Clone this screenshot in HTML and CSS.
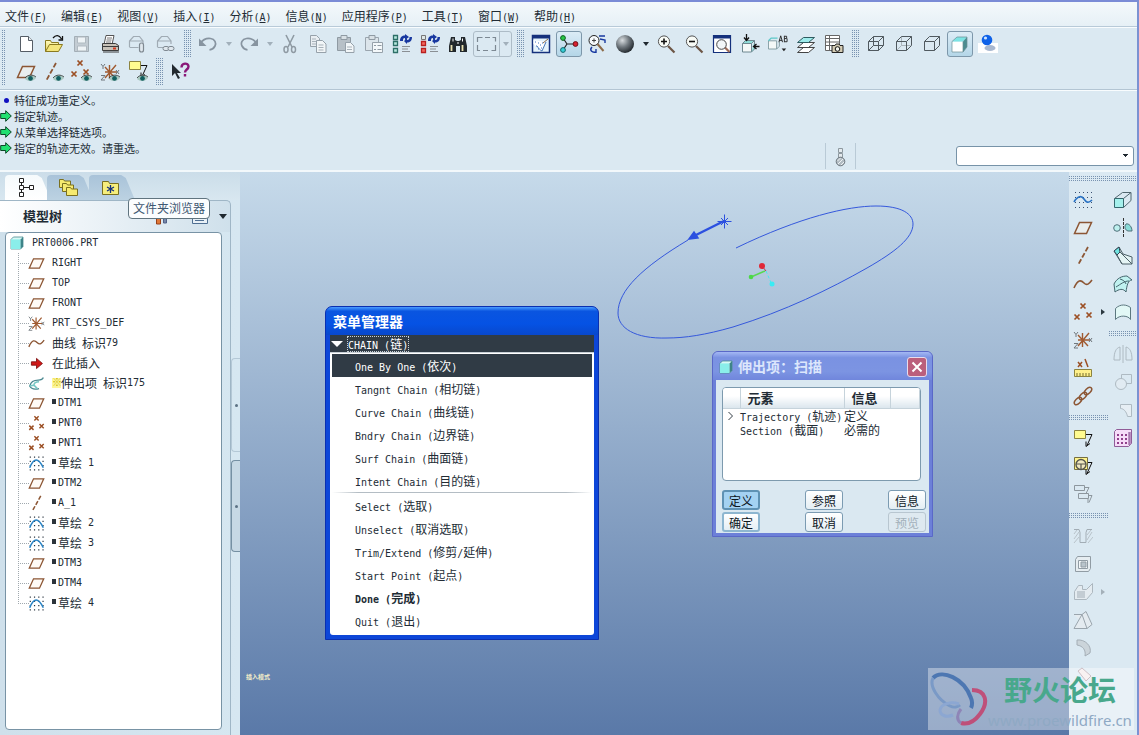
FILE: index.html
```
<!DOCTYPE html>
<html lang="zh-CN">
<head>
<meta charset="utf-8">
<title>PRT0006</title>
<link rel="stylesheet" href="styles.css">
</head>
<body>
<svg class="defs" width="0" height="0" aria-hidden="true">
  <defs>
    <linearGradient id="gfold" x2="0" y2="1"><stop offset="0" stop-color="#fffbc0"/><stop offset="1" stop-color="#e8d860"/></linearGradient>
    <radialGradient id="gball" cx=".35" cy=".3" r=".75"><stop offset="0" stop-color="#d8dde0"/><stop offset=".5" stop-color="#6f777d"/><stop offset="1" stop-color="#1d2328"/></radialGradient>
    <symbol id="new" viewBox="0 0 20 20"><path d="M4.500 2.500h8l4 4v11h-12z" fill="#fff" stroke="#555d66"/><path d="M12.500 2.500v4h4" fill="#e8eef2" stroke="#555d66"/></symbol>
    <symbol id="open" viewBox="0 0 20 20"><path d="M1.500 17.500v-11h5l1 2h7v3" fill="url(#gfold)" stroke="#8a7a20"/><path d="M1.500 17.500l4-7h13l-4 7z" fill="#f4e67c" stroke="#8a7a20"/><path d="M9 4c3-3.500 6-3 8.500 1M18.500 2v4h-4" fill="none" stroke="#111" stroke-width="1.300"/></symbol>
    <symbol id="save" viewBox="0 0 20 20"><path d="M2.500 2.500h14v15h-14z" fill="#c3ccd3" stroke="#a3aeb6"/><path d="M5.500 3h8v6h-8zM5.500 12h9v5h-9z" fill="#eef3f6" stroke="#b0bac1"/></symbol>
    <symbol id="print" viewBox="0 0 20 20"><path d="M6 1.500h8l-2 9H4z" fill="#fff" stroke="#555"/><path d="M7 4h5M6.500 6h5M6 8h5" stroke="#777"/><path d="M2.500 9.500h13l3 2v5h-16z" fill="#c8c2b8" stroke="#3c3c3c"/><path d="M2 12.500h16.500M3 18h16" stroke="#3c3c3c"/><path d="M13 14.500h3" stroke="#d03a20" stroke-width="2"/></symbol>
    <symbol id="mail" viewBox="0 0 20 20"><path d="M1.500 13v-6l4-4.500h6l3.500 4.500v4M1.500 7h13M1.500 13.500h9" fill="none" stroke="#a0abb4" stroke-width="1.200"/><path d="M11.500 16v-5a2 2 0 0 1 4 0v5a2 2 0 0 1-4 0v-3" fill="#e0e8ee" stroke="#7f8991" stroke-width="1.200"/></symbol>
    <symbol id="maillink" viewBox="0 0 20 20"><path d="M1.500 13v-6l4-4.500h6l3.500 4.500v3M1.500 7h13M1.500 13.500h6" fill="none" stroke="#a0abb4" stroke-width="1.200"/><rect x="7" y="12.500" width="6" height="4" rx="2" fill="#e0e8ee" stroke="#7f8991"/><rect x="12" y="12.500" width="6" height="4" rx="2" fill="#e0e8ee" stroke="#7f8991"/></symbol>
    <symbol id="undo" viewBox="0 0 20 20"><path d="M2 9.500C5 5.500 9 4 12.500 4.500c4.500.7 6 4.500 4.500 7.500-1 2-3 3.500-5.500 3.800" fill="none" stroke="#8794a0" stroke-width="1.700"/><path d="M1 4.500v7.500h7.500z" fill="#8794a0"/></symbol>
    <symbol id="cut" viewBox="0 0 20 20"><path d="M6 1l6 12M14 1L8 13" stroke="#8f9aa3" stroke-width="1.600" fill="none"/><ellipse cx="6" cy="15.500" rx="2" ry="3" fill="none" stroke="#8f9aa3" stroke-width="1.500"/><ellipse cx="13.500" cy="15.500" rx="2" ry="3" fill="none" stroke="#8f9aa3" stroke-width="1.500"/></symbol>
    <symbol id="copy" viewBox="0 0 20 20"><path d="M2.500 1.500h6l3 3v8h-9z" fill="#e9eef2" stroke="#96a1aa"/><path d="M8.500 6.500h6l3.500 3.500v8.500h-9.500z" fill="#f2f6f8" stroke="#96a1aa"/><path d="M4 5h4M4 7.500h4M4 10h4M10.500 11h5M10.500 13.500h5M10.500 16h5" stroke="#a8b2ba"/></symbol>
    <symbol id="paste" viewBox="0 0 20 20"><path d="M1.500 3.500h13v13h-13z" fill="#b7c0c7" stroke="#8f9aa3"/><path d="M5 1.500h6v4H5z" fill="#d8e0e5" stroke="#8f9aa3"/><path d="M9.500 8.500h5l3.500 3.500v6.500H9.500z" fill="#f2f6f8" stroke="#96a1aa"/><path d="M11 13h5M11 15.500h5" stroke="#a8b2ba"/></symbol>
    <symbol id="pastesp" viewBox="0 0 20 20"><path d="M1.500 3.500h13v13h-13z" fill="#dce5eb" stroke="#9aa5ae"/><path d="M5 1.500h6v4H5z" fill="#d8e0e5" stroke="#8f9aa3"/><path d="M8.500 8.500h10v10h-10z" fill="#f4f8fa" stroke="#96a1aa"/><path d="M10 11.500h2M13.500 11.500h4M10 15.500h2M13.500 15.500h4" stroke="#8f9aa3"/></symbol>
    <symbol id="regen" viewBox="0 0 20 20"><path d="M1.500 1.500h4v4h-4zM1.500 7.500h4v4h-4zM1.500 14.500h4v4h-4z" fill="#b8e8de" stroke="#2d6f68" stroke-width="1.300"/><path d="M10 12.500h8M10 15h6M10 17.500h8" stroke="#8a8f94"/><path d="M8 7c0-4 2-5.500 5-5.500V0l4 3-4 3V4c-2 0-2 1-2 3zM20 3c0 4-2 5.500-5 5.500V10l-3-3 3-2.500V6c2 0 2.500-1 2.500-3z" fill="#1838a0"/></symbol>
    <symbol id="regen2" viewBox="0 0 20 20"><path d="M1.500 1.500h4v4h-4z" fill="#dfe8e8" stroke="#777"/><path d="M1.500 7.500h4v4h-4zM1.500 14.500h4v4h-4z" fill="#f46860" stroke="#b82020" stroke-width="1.300"/><path d="M10 12.500h8M10 15h6M10 17.500h8" stroke="#8a8f94"/><path d="M8 7c0-4 2-5.500 5-5.500V0l4 3-4 3V4c-2 0-2 1-2 3zM20 3c0 4-2 5.500-5 5.500V10l-3-3 3-2.500V6c2 0 2.500-1 2.500-3z" fill="#1838a0"/></symbol>
    <symbol id="find" viewBox="0 0 20 20"><path d="M3 3h4v3l2 1h2l2-1V3h4l2 9v6h-7v-6H8v6H1v-6z" fill="#22282c"/><path d="M3.500 11v6M14.500 11v6" stroke="#e8e0b0" stroke-width="1.800"/><path d="M5 4.500v3M14.500 4.500v3M10 8v2" stroke="#fff"/></symbol>
    <symbol id="lasso" viewBox="0 0 24 20"><path d="M3.500 8v-4.500h5M11 3.500h5M18.500 3.500h3v4M21.500 11v5.500h-4M14 16.500H9M6 16.500H3.500V11" fill="none" stroke="#7d8993" stroke-width="1.200"/></symbol>
    <symbol id="repaint" viewBox="0 0 20 20"><path d="M1.500 1.500h17v17h-17z" fill="#e4f3fb" stroke="#14307c" stroke-width="1.500"/><path d="M1 3h18" stroke="#14307c" stroke-width="3"/><path d="M2.500 6l12 2-4 9c-2 0-2-2-8-7z" fill="#fff"/><path d="M15 8l-4 9c-2-1-3-2-5-5" fill="none" stroke="#4878b8"/><path d="M4 8h1M7 9h1M5 12h1M9 11h1M11 9h1M10 14h1M7 15h1" stroke="#3f77c0"/><path d="M12 9l5-4" stroke="#8a6a48"/></symbol>
    <symbol id="spin" viewBox="0 0 20 20"><path d="M4 4l4 6h9M8 10l-4 6" fill="none" stroke="#222" stroke-width="1.200"/><circle cx="4" cy="4" r="2.400" fill="#28c848" stroke="#106020"/><circle cx="16.500" cy="10" r="2.400" fill="#d82030" stroke="#701018"/><circle cx="4" cy="16" r="2.400" fill="#38d0d8" stroke="#10686c"/></symbol>
    <symbol id="orient" viewBox="0 0 20 20"><circle cx="7" cy="6.500" r="5" fill="#f6fafc" stroke="#222"/><path d="M5 6.500h4M7 4.500v4" stroke="#444"/><path d="M10.500 10l6 7" stroke="#8c6a48" stroke-width="2"/><path d="M12 2h6M13 5l5 1v3M5 13c-3 3 0 6 4 5M9 15v4" stroke="#1838a0" stroke-width="1.400" fill="none"/></symbol>
    <symbol id="ball" viewBox="0 0 20 20"><circle cx="10" cy="10" r="9" fill="url(#gball)"/></symbol>
    <symbol id="zin" viewBox="0 0 20 20"><path d="M12 12l6.500 6.500" stroke="#6d5646" stroke-width="2.200"/><circle cx="8" cy="7.500" r="5.600" fill="#f8fbf6" stroke="#555"/><path d="M5 7.500h6M8 4.500v6" stroke="#111" stroke-width="1.600"/></symbol>
    <symbol id="zout" viewBox="0 0 20 20"><path d="M12 12l6.500 6.500" stroke="#6d5646" stroke-width="2.200"/><circle cx="8" cy="7.500" r="5.600" fill="#f8fbf6" stroke="#555"/><path d="M5 7.500h6" stroke="#111" stroke-width="1.600"/></symbol>
    <symbol id="refit" viewBox="0 0 20 20"><path d="M1.500 1.500h17v17h-17z" fill="#fff" stroke="#14307c" stroke-width="1.200"/><path d="M1 3h18" stroke="#14307c" stroke-width="3"/><path d="M12.500 13l5 5" stroke="#9b6a58" stroke-width="2.200"/><circle cx="9.500" cy="10.500" r="4.800" fill="#f2f6f8" stroke="#444"/></symbol>
    <symbol id="reor" viewBox="0 0 20 20"><path d="M2.500 9.500h9v8.500h-9z" fill="#f4f8f8" stroke="#6f8890"/><path d="M2.500 9.500l3-3h9l-3 3zM11.500 18l3-3V6.500" fill="#8fdcd8" stroke="#6f8890"/><path d="M6.500 0v6M4 3.500l2.500 3 2.500-3M19.500 12.500h-5M16.500 10l-3 2.500 3 2.500" fill="none" stroke="#111" stroke-width="1.300"/></symbol>
    <symbol id="views" viewBox="0 0 22 20"><path d="M.5 6.500h9v9H.5z" fill="#f4f8f8" stroke="#7f989f"/><path d="M.5 6.500l3-3h7" fill="none" stroke="#5cc8c8" stroke-width="1.500"/><path d="M9.500 15.500l3-3v-5" fill="none" stroke="#7f989f"/><path d="M12 8l2-7 2 7M12.500 6h3M18 1v7M18 1.500h2.500v2.500H18M18 7.500h3V4" fill="none" stroke="#222"/><path d="M15 15h5l-2.500 3z" fill="#222"/></symbol>
    <symbol id="layers" viewBox="0 0 20 20"><path d="M1.500 18.500l6-5h11l-6 5zM1.500 13.500l6-5h11l-6 5z" fill="#fff" stroke="#444"/><path d="M1.500 8.500l6-5h11l-6 5z" fill="#9fecec" stroke="#2d5b60"/></symbol>
    <symbol id="vm" viewBox="0 0 20 20"><path d="M1.500 1.500h14v15h-14zM1.500 4.500h14M1.500 8h14M1.500 11.500h14M5.500 1.500v15" fill="#fff" stroke="#666"/><path d="M8 11.500h3l1-1.500h3l1 1.500h3v7H8z" fill="#d4ccb4" stroke="#222"/><circle cx="13.500" cy="15" r="2.300" fill="#f4f4ec" stroke="#111"/></symbol>
    <symbol id="wire" viewBox="0 0 20 20"><path d="M2.500 7.500h10v9h-10zM7.500 2.500h10v9h-10zM2.500 7.500l5-5M12.500 7.500l5-5M12.500 16.500l5-5M2.500 16.500l5-5" fill="none" stroke="#50595f"/></symbol>
    <symbol id="hidl" viewBox="0 0 20 20"><path d="M7.500 2.500v9h9M2.500 16.500l5-5" fill="none" stroke="#a9b3ba"/><path d="M2.500 7.500h10v9h-10zM2.500 7.500l5-5h10v9l-5 5M12.500 7.500l5-5" fill="none" stroke="#50595f"/></symbol>
    <symbol id="nohid" viewBox="0 0 20 20"><path d="M2.500 7.500h10v9h-10zM2.500 7.500l5-5h10v9l-5 5M12.500 7.500l5-5" fill="none" stroke="#50595f"/></symbol>
    <symbol id="shade" viewBox="0 0 20 20"><path d="M2 7.500h11V18H2z" fill="#fff"/><path d="M2 7.500L7 3h10l-4 4.500z" fill="#7de4e4"/><path d="M13 7.500L17 3v10l-4 5z" fill="#4b8c90"/><path d="M2 7.500V18h11V7.500M2 7.500L7 3h10v10l-4 5" fill="none" stroke="#6a8c94" stroke-width=".7"/></symbol>
    <symbol id="real" viewBox="0 0 20 20"><path d="M0 9h20v10H0z" fill="#fff"/><ellipse cx="12" cy="14" rx="5.500" ry="3" fill="#a8b8d0"/><circle cx="9" cy="6" r="5.300" fill="#0f62e8"/><circle cx="7.500" cy="4" r="1.600" fill="#cfe4ff"/></symbol>
    <symbol id="eye" viewBox="0 0 12 8"><path d="M0 5C3 0 9 0 12 4 9 8 3 8 0 5z" fill="#a8c8c0"/><circle cx="6" cy="4.500" r="2.600" fill="#125e60"/><path d="M0 4C3 0 9 0 12 3" fill="none" stroke="#3b3f40"/></symbol>
    <symbol id="plane" viewBox="0 0 20 20"><path d="M6.500 4.500h12l-5 11h-12z" fill="#fff6e8" fill-opacity=".4" stroke="#8c5634" stroke-width="1.500"/></symbol>
    <symbol id="axis" viewBox="0 0 20 20"><path d="M15 1L5 19" stroke="#8c5634" stroke-width="1.800" stroke-dasharray="5 2"/></symbol>
    <symbol id="pts" viewBox="0 0 20 20"><path d="M7.500 1.500l5 5m0-5l-5 5M1.500 12.500l5 5m0-5l-5 5M13.500 10.500l5 5m0-5l-5 5" stroke="#9b4f24" stroke-width="1.700" fill="none"/></symbol>
    <symbol id="csys" viewBox="0 0 20 20"><path d="M5 5l10 11M16 3L5 16M9.500 3v14M5 10h12" stroke="#a05a30" stroke-width="1.400"/><path d="M1 2l2 2.500L5 2M3 4.500V7M1 13.500h4l-4 4.500h4M16 8l3 4m0-4l-3 4" fill="none" stroke="#70777c"/></symbol>
    <symbol id="curve" viewBox="0 0 20 20"><path d="M1 14C5 5 8 6 11 9s5 1 8-3" fill="none" stroke="#8c5634" stroke-width="1.600"/></symbol>
    <symbol id="sketch" viewBox="0 0 20 20"><path d="M2 2.500h17M2 7.500h17M2 12.500h17M2 17.500h17" stroke="#3a5070" stroke-width="1.200" stroke-dasharray="1 3"/><path d="M1 12C5 5 9 6 11 9s4 5 8 1" fill="none" stroke="#2a73c4" stroke-width="1.700"/></symbol>
    <symbol id="sk" viewBox="0 0 20 20"><path d="M2 2.500h17M2 7.500h17M2 12.500h17M2 17.500h17" stroke="#2a3540" stroke-width="1.400" stroke-dasharray="1.400 3.600"/><path d="M2 15C7 3 12 3 18 15" fill="none" stroke="#2a83c4" stroke-width="1.800"/></symbol>
    <symbol id="note" viewBox="0 0 20 20"><path d="M1.500 2.500h11v8h-11z" fill="#fffb90" stroke="#8c8440"/><path d="M13 6.500h6l-5 11M13 13.500v5l4-3" fill="none" stroke="#111"/></symbol>
    <symbol id="help" viewBox="0 0 20 20"><path d="M2 2v12l3-3 3 6 2-1-3-5h4z" fill="#222a30"/><path d="M11.500 5.500c0-5 7-5 7-1 0 3-3.500 3-3.500 6M15 12v2.500" fill="none" stroke="#8a1878" stroke-width="2.400"/></symbol>
    <symbol id="cube" viewBox="0 0 20 20"><path d="M2.500 5.500l3-3h12v12l-3 3h-12z" fill="#d8f8f6" stroke="#4d8c90"/><path d="M2.500 5.500h12v12h-12z" fill="#8aeeea"/><path d="M14.500 5.500l3-3v12l-3 3z" fill="#3e8488"/></symbol>
    <symbol id="ins" viewBox="0 0 20 20"><path d="M4 8h6V4l7 6-7 6v-4H4z" fill="#d01818" stroke="#7c0c0c"/></symbol>
    <symbol id="sweep" viewBox="0 0 20 20"><path d="M18 3c-1 3-3 3-6 3-6 0-9 3-10 7 2 4 7 4 11 3" fill="none" stroke="#4a8890" stroke-width="1.600"/><path d="M13 8c-4 0-6 1-6 4M2 13l5-1 4 4" fill="none" stroke="#77c8c4" stroke-width="1.800"/></symbol>
    <symbol id="ruler" viewBox="0 0 20 20"><path d="M1.500 11.500h17v7h-17z" fill="#fff08a" stroke="#8c8440"/><path d="M4 15v3M7 15v3M10 15v3M13 15v3M16 15v3" stroke="#746c30"/><path d="M5 4l4 5M9 4L5 9M12 1l3 8" stroke="#9b4f24" stroke-width="1.500"/></symbol>
    <symbol id="chain" viewBox="0 0 20 20"><g fill="none" stroke="#8c5634" stroke-width="1.500"><ellipse cx="5" cy="15" rx="4.500" ry="2.500" transform="rotate(-45 5 15)"/><ellipse cx="10" cy="10" rx="4.500" ry="2.500" transform="rotate(-45 10 10)"/><ellipse cx="15" cy="5" rx="4.500" ry="2.500" transform="rotate(-45 15 5)"/></g></symbol>
    <symbol id="wheel" viewBox="0 0 20 20"><path d="M1.500 1.500h13v12h-13z" fill="#fff48a" stroke="#777040"/><circle cx="8" cy="8.500" r="5" fill="#f0e8c0" stroke="#55554c" stroke-width="1.400"/><path d="M3 8h10M8 8v5" stroke="#55554c" stroke-width="1.200"/><path d="M15 6.500h4l-5 11M13 13.500v5l4-3" fill="none" stroke="#111"/></symbol>
    <symbol id="notes2" viewBox="0 0 20 20"><path d="M1.500 1.500h10v5h-10zM5.500 9.500h10v5h-10z" fill="none" stroke="#8d979e"/><path d="M12 3.500h4l-3 6M15 11.500h4l-3 7M15 15v4" fill="none" stroke="#8d979e"/></symbol>
    <symbol id="extr" viewBox="0 0 20 20"><path d="M1.500 8.500h9v9h-9z" fill="#a4f0ec" stroke="#34686e"/><path d="M1.500 8.500l8-6h8.500l-7.500 6M18 2.500v8l-7.500 7" fill="none" stroke="#50666e"/></symbol>
    <symbol id="revo" viewBox="0 0 20 20"><path d="M10.500 0v20" stroke="#333" stroke-dasharray="3 1"/><circle cx="4" cy="10" r="3.300" fill="#bdf0ee" stroke="#50707a"/><path d="M13 6c3-1 6 3 6 7h-4c-3-1-4-4-2-7z" fill="#88dcd8" stroke="#50707a"/></symbol>
    <symbol id="blend" viewBox="0 0 20 20"><path d="M1 5l5-4 4 7 9 3v7H9z" fill="#e4f4f4" stroke="#4d6068"/><path d="M1 5l5-4 1 5-3 3z" fill="#70e4e0" stroke="#345"/><path d="M7 6l12 12M4 9l5 9" stroke="#4d6068"/></symbol>
    <symbol id="bound" viewBox="0 0 20 20"><path d="M1 10C4 4 9 2 14 2l5 4c-4 0-5 5-6 12-3-4-7-3-11 0z" fill="#c0f2f0" stroke="#45656d"/><path d="M7 5c3 1 5 2 6 5M3 13c5-3 8-6 13-6" fill="none" stroke="#45656d"/></symbol>
    <symbol id="sty" viewBox="0 0 20 20"><path d="M2.500 17.500v-11c5-5 11-4 15-1v12c-2-4-11-5-15 0z" fill="#e2f8f6" stroke="#5c7880"/></symbol>
    <symbol id="mirr" viewBox="0 0 20 20"><path d="M10 1v18M7 3v13H1C1 8 3 4 7 3zM13 3v13h6c0-8-2-12-6-13z" fill="none" stroke="#aebac2"/></symbol>
    <symbol id="merge" viewBox="0 0 20 20"><path d="M8.500 2.500h10v9h-10z" fill="none" stroke="#aebac2"/><circle cx="8" cy="12" r="5.500" fill="#e1ebf2" stroke="#aebac2"/></symbol>
    <symbol id="trim" viewBox="0 0 20 20"><path d="M7.500 4.500h11v12h-4c-1-5-4-8-7-8z" fill="#e6eef4" stroke="#aebac2"/></symbol>
    <symbol id="patt" viewBox="0 0 20 20"><path d="M1.500 3.500l2-2h15v14l-3 3h-14z" fill="#f6dcf8" stroke="#905c98"/><path d="M16.500 4v13" stroke="#a878b0" stroke-width="2.500"/><path d="M4 7h10M4 11h10M4 15h10" stroke="#90408c" stroke-width="2" stroke-dasharray="2 2"/></symbol>
    <symbol id="hole" viewBox="0 0 20 20"><path d="M1 3.500h5l1 3v10h6v-10l1-3h5" fill="none" stroke="#a2adb5"/><path d="M1 8l3-4M1 13l5-7M1 17l5-6M15 17l5-6M14 14l5-8M14 9l4-5" stroke="#b9c3ca"/></symbol>
    <symbol id="shell" viewBox="0 0 20 20"><path d="M2.500 5.500l2-3h13v12l-2 3h-13z" fill="#e6edf1" stroke="#919ca4"/><path d="M5.500 6.500h9v8h-9z" fill="#f2f6f8" stroke="#919ca4"/><path d="M8 8h5v5H8z" fill="#b9c4cb" stroke="#919ca4"/></symbol>
    <symbol id="rib" viewBox="0 0 20 20"><path d="M1.500 9.500l4-6h4v4h4l6-6v9l-6 7h-12z" fill="#e4ebf0" stroke="#acb7bf"/><path d="M4 9h8v7H4z" fill="#c3ccd3"/></symbol>
    <symbol id="draft" viewBox="0 0 20 20"><path d="M1 4.500h8l4-3 6 13-5 4H1l8-14 5 14" fill="#e4ebf0" stroke="#9aa5ad"/></symbol>
    <symbol id="round" viewBox="0 0 20 20"><path d="M4 2c8-1 15 6 13 13l-5 3c1-6-2-10-8-11z" fill="#cbd4da" stroke="#a4aeb6"/></symbol>
    <symbol id="chamf" viewBox="0 0 20 20"><path d="M5 5l4-3 9 8-5 5z" fill="#f4e8ea" stroke="#b09aa4"/></symbol>
    <symbol id="tree" viewBox="0 0 20 20"><path d="M3.500 1.500h4v4h-4zM3.500 8.500h4v4h-4zM3.500 15.500h4v4h-4zM13.500 8.500h4v4h-4zM5.500 5.500v3M5.500 12.500v3M7.500 10.500h6" fill="#fff" stroke="#222"/></symbol>
    <symbol id="folders" viewBox="0 0 20 20"><g fill="#f6ea70" stroke="#7a7020"><path d="M1.500 10.500v-8h4l1 1.500h6v6.500z"/><path d="M4.500 14.500v-8h4l1 1.500h6v6.500z"/><path d="M8.500 18.500v-8h4l1 1.500h6v6.500z"/></g></symbol>
    <symbol id="fav" viewBox="0 0 20 20"><path d="M2.500 17.500v-13h6l1 2h9v11z" fill="#f6ee7c" stroke="#7a7020"/><path d="M10.500 8v8M7 10l7 4M14 10l-7 4" stroke="#14307c" stroke-width="1.300"/></symbol>
    <symbol id="go" viewBox="0 0 12 12"><path d="M.7 3.500h5V.7L11.300 6l-5.600 5.300V8.500h-5z" fill="#20e070" stroke="#0c4828"/></symbol>
    <symbol id="therm" viewBox="0 0 12 20"><path d="M3.500 1.500h4v4h-4zM3.500 6.500h4v4h-4z" fill="#e4eaee" stroke="#8d989f"/><circle cx="5.500" cy="14.500" r="4.300" fill="#b2bcc3" stroke="#6f7980"/><path d="M3 17l5-5M2.500 14l3-3M6 18l3-3" stroke="#eef2f4"/></symbol>
  </defs>
</svg>

<header class="top">
  <nav class="menubar">
    <a href="#">文件<span class="en">(<u>F</u>)</span></a>
    <a href="#">编辑<span class="en">(<u>E</u>)</span></a>
    <a href="#">视图<span class="en">(<u>V</u>)</span></a>
    <a href="#">插入<span class="en">(<u>I</u>)</span></a>
    <a href="#">分析<span class="en">(<u>A</u>)</span></a>
    <a href="#">信息<span class="en">(<u>N</u>)</span></a>
    <a href="#">应用程序<span class="en">(<u>P</u>)</span></a>
    <a href="#">工具<span class="en">(<u>T</u>)</span></a>
    <a href="#">窗口<span class="en">(<u>W</u>)</span></a>
    <a href="#">帮助<span class="en">(<u>H</u>)</span></a>
  </nav>
  <div class="toolbars">
    <i class="grip tall"></i>
    <div class="rows">
      <div class="row">
        <button class="tb" aria-label="新建"><svg><use href="#new"/></svg></button>
        <button class="tb" aria-label="打开"><svg><use href="#open"/></svg></button>
        <button class="tb" aria-label="保存"><svg><use href="#save"/></svg></button>
        <button class="tb" aria-label="打印"><svg><use href="#print"/></svg></button>
        <button class="tb" aria-label="发送"><svg><use href="#mail"/></svg></button>
        <button class="tb" aria-label="发送链接"><svg><use href="#maillink"/></svg></button>
        <i class="grip"></i>
        <button class="tb" aria-label="撤消"><svg><use href="#undo"/></svg></button>
        <button class="dd off" aria-label="撤消列表"></button>
        <button class="tb flip" aria-label="重做"><svg><use href="#undo"/></svg></button>
        <button class="dd off" aria-label="重做列表"></button>
        <button class="tb" aria-label="剪切"><svg><use href="#cut"/></svg></button>
        <button class="tb" aria-label="复制"><svg><use href="#copy"/></svg></button>
        <button class="tb" aria-label="粘贴"><svg><use href="#paste"/></svg></button>
        <button class="tb" aria-label="选择性粘贴"><svg><use href="#pastesp"/></svg></button>
        <button class="tb" aria-label="再生"><svg><use href="#regen"/></svg></button>
        <button class="tb" aria-label="再生管理器"><svg><use href="#regen2"/></svg></button>
        <button class="tb" aria-label="查找"><svg><use href="#find"/></svg></button>
        <div class="split"><button class="lasso" aria-label="框选"><svg><use href="#lasso"/></svg></button><button class="dd off" aria-label="框选列表"></button></div>
        <i class="grip"></i>
        <button class="tb" aria-label="重画"><svg><use href="#repaint"/></svg></button>
        <button class="tb on" aria-label="旋转中心"><svg><use href="#spin"/></svg></button>
        <button class="tb" aria-label="定向模式"><svg><use href="#orient"/></svg></button>
        <button class="tb" aria-label="外观"><svg><use href="#ball"/></svg></button>
        <button class="dd" aria-label="外观列表"></button>
        <button class="tb" aria-label="放大"><svg><use href="#zin"/></svg></button>
        <button class="tb" aria-label="缩小"><svg><use href="#zout"/></svg></button>
        <button class="tb" aria-label="重新调整"><svg><use href="#refit"/></svg></button>
        <button class="tb" aria-label="重定向"><svg><use href="#reor"/></svg></button>
        <button class="tb" aria-label="视图列表"><svg><use href="#views"/></svg></button>
        <button class="tb" aria-label="层"><svg><use href="#layers"/></svg></button>
        <button class="tb" aria-label="视图管理器"><svg><use href="#vm"/></svg></button>
        <i class="grip"></i>
        <button class="tb" aria-label="线框"><svg><use href="#wire"/></svg></button>
        <button class="tb" aria-label="隐藏线"><svg><use href="#hidl"/></svg></button>
        <button class="tb" aria-label="消隐"><svg><use href="#nohid"/></svg></button>
        <button class="tb on" aria-label="着色"><svg><use href="#shade"/></svg></button>
        <button class="tb" aria-label="增强的真实感"><svg><use href="#real"/></svg></button>
      </div>
      <div class="row">
        <button class="tb" aria-label="平面显示"><svg><use href="#plane"/><use href="#eye" x="9" y="12" width="11" height="8"/></svg></button>
        <button class="tb" aria-label="轴显示"><svg><use href="#axis" x="-3"/><use href="#eye" x="9" y="12" width="11" height="8"/></svg></button>
        <button class="tb" aria-label="点显示"><svg><use href="#pts" x="-2" y="-3"/><use href="#eye" x="9" y="12" width="11" height="8"/></svg></button>
        <button class="tb" aria-label="坐标系显示"><svg><use href="#csys"/><use href="#eye" x="9" y="12" width="11" height="8"/></svg></button>
        <button class="tb" aria-label="注释显示"><svg><use href="#note" y="-3"/><use href="#eye" x="9" y="12" width="11" height="8"/></svg></button>
        <i class="grip"></i>
        <button class="tb" aria-label="上下文帮助"><svg><use href="#help"/></svg></button>
      </div>
    </div>
  </div>
  <div class="messages">
    <ul class="log">
      <li><i class="bullet"></i>特征成功重定义。</li>
      <li><svg><use href="#go"/></svg>指定轨迹。</li>
      <li><svg><use href="#go"/></svg>从菜单选择链选项。</li>
      <li><svg><use href="#go"/></svg>指定的轨迹无效。请重选。</li>
    </ul>
    <div class="status">
      <div class="therm"><svg><use href="#therm"/></svg></div>
      <select class="filter" aria-label="过滤器"><option></option></select>
    </div>
  </div>
</header>

<main class="work">
  <aside class="side">
    <div class="tabs">
      <button class="tab active" aria-label="模型树"><svg><use href="#tree"/></svg></button>
      <button class="tab" aria-label="文件夹浏览器"><svg><use href="#folders"/></svg></button>
      <button class="tab" aria-label="收藏夹"><svg><use href="#fav"/></svg></button>
    </div>
    <section class="panel">
      <div class="panelhead">
        <h2>模型树</h2>
        <svg class="tools" viewBox="0 0 62 14"><path d="M2.500 3h4v9h-4z" fill="#e07838" stroke="#984018"/><path d="M9.500 3h3v8h-3z" fill="#7888a8" stroke="#506088"/><path d="M38.500 2.500h15v9h-15z" fill="#e8f0f6" stroke="#4f6f92"/><path d="M41 8.500h9" stroke="#4f6f92"/></svg>
        <button class="dd" aria-label="设置"></button>
        <div class="tip">文件夹浏览器</div>
      </div>
      <div class="tree">
        <div class="root"><svg><use href="#cube"/></svg><span class="en">PRT0006.PRT</span></div>
        <ul>
          <li><svg><use href="#plane"/></svg><span class="en">RIGHT</span></li>
          <li><svg><use href="#plane"/></svg><span class="en">TOP</span></li>
          <li><svg><use href="#plane"/></svg><span class="en">FRONT</span></li>
          <li><svg><use href="#csys"/></svg><span class="en">PRT_CSYS_DEF</span></li>
          <li><svg><use href="#curve"/></svg>曲线<span class="en"> </span>标识<span class="en">79</span></li>
          <li><svg><use href="#ins"/></svg>在此插入</li>
          <li><svg><use href="#sweep"/></svg><span class="en star">※</span>伸出项<span class="en"> </span>标识<span class="en">175</span></li>
          <li><svg><use href="#plane"/></svg><i class="sq"></i><span class="en">DTM1</span></li>
          <li><svg><use href="#pts"/></svg><i class="sq"></i><span class="en">PNT0</span></li>
          <li><svg><use href="#pts"/></svg><i class="sq"></i><span class="en">PNT1</span></li>
          <li><svg><use href="#sk"/></svg><i class="sq"></i>草绘<span class="en"> 1</span></li>
          <li><svg><use href="#plane"/></svg><i class="sq"></i><span class="en">DTM2</span></li>
          <li><svg><use href="#axis"/></svg><i class="sq"></i><span class="en">A_1</span></li>
          <li><svg><use href="#sk"/></svg><i class="sq"></i>草绘<span class="en"> 2</span></li>
          <li><svg><use href="#sk"/></svg><i class="sq"></i>草绘<span class="en"> 3</span></li>
          <li><svg><use href="#plane"/></svg><i class="sq"></i><span class="en">DTM3</span></li>
          <li><svg><use href="#plane"/></svg><i class="sq"></i><span class="en">DTM4</span></li>
          <li><svg><use href="#sk"/></svg><i class="sq"></i>草绘<span class="en"> 4</span></li>
        </ul>
      </div>
    </section>
    <div class="sash"><button aria-label="展开"></button><button class="dark" aria-label="折叠"></button></div>
  </aside>

  <section class="view">
    <svg class="scene">
      <path d="M496 76C560 45 608 34 636 34C662 34 673 42 673 52C673 66 655 80 627 96C590 117 545 139 493 155C465 163 445 166 427 166C395 167 378 156 378 141C378 118 403 95 448 68" fill="none" stroke="#3558dc"/>
      <path d="M484 49L456 63" stroke="#2c50e0" stroke-width="2.500"/>
      <path d="M449 67l5-7 4 6z" fill="#2c50e0" stroke="#2c50e0" stroke-width="1.500"/>
      <path d="M477.500 49.500h14M484.500 42.500v14M481 46l7 7M488 46l-7 7" stroke="#2c50e0"/>
      <path d="M511 105l14-6" stroke="#58d850" stroke-width="1.500"/><circle cx="511" cy="105" r="2.300" fill="#4cd848"/>
      <path d="M522 94l4 5" stroke="#b83850"/><circle cx="522" cy="94" r="3" fill="#e02838"/>
      <path d="M526 99l6 14" stroke="#48e8f0" stroke-dasharray="3 2"/><circle cx="532" cy="112" r="2.500" fill="#38ecf4"/>
    </svg>
    <div class="mode">插入模式</div>

    <div class="menuman">
      <h2>菜单管理器</h2>
      <div class="chain"><i></i><span class="focus"><span class="en">CHAIN (</span>链<span class="en">)</span></span></div>
      <div class="list">
        <button class="sel"><span class="en">One By One (</span>依次<span class="en">)</span></button>
        <button><span class="en">Tangnt Chain (</span>相切链<span class="en">)</span></button>
        <button><span class="en">Curve Chain (</span>曲线链<span class="en">)</span></button>
        <button><span class="en">Bndry Chain (</span>边界链<span class="en">)</span></button>
        <button><span class="en">Surf Chain (</span>曲面链<span class="en">)</span></button>
        <button><span class="en">Intent Chain (</span>目的链<span class="en">)</span></button>
        <hr>
        <button><span class="en">Select (</span>选取<span class="en">)</span></button>
        <button><span class="en">Unselect (</span>取消选取<span class="en">)</span></button>
        <button><span class="en">Trim/Extend (</span>修剪<span class="en">/</span>延伸<span class="en">)</span></button>
        <button><span class="en">Start Point (</span>起点<span class="en">)</span></button>
        <button class="strong"><span class="en">Done (</span>完成<span class="en">)</span></button>
        <button><span class="en">Quit (</span>退出<span class="en">)</span></button>
      </div>
    </div>

    <div class="dialog">
      <div class="title"><svg><use href="#cube"/></svg><h2>伸出项：扫描</h2><button class="close" aria-label="关闭"><svg viewBox="0 0 12 12"><path d="M1.500 1.500l9 9M10.500 1.500l-9 9" stroke="#fff" stroke-width="2"/></svg></button></div>
      <div class="inner">
        <div class="box">
          <table>
            <colgroup><col class="c1"><col class="c2"><col class="c3"><col></colgroup>
            <thead><tr><th></th><th>元素</th><th>信息</th><th></th></tr></thead>
            <tbody>
              <tr><td class="mark"><svg viewBox="0 0 6 10"><path d="M.5 1l4 4-4 4" fill="none" stroke="#333c44"/></svg></td><td><span class="en">Trajectory (</span>轨迹<span class="en">)</span></td><td>定义</td><td></td></tr>
              <tr><td></td><td><span class="en">Section (</span>截面<span class="en">)</span></td><td>必需的</td><td></td></tr>
            </tbody>
          </table>
        </div>
        <div class="btns">
          <button class="hot">定义</button><button>参照</button><button>信息</button>
          <button class="def">确定</button><button>取消</button><button disabled>预览</button>
        </div>
      </div>
    </div>
  </section>

  <aside class="right">
    <i class="hgrip"></i>
    <div class="cols">
      <div class="col">
        <button class="tb" aria-label="草绘"><svg><use href="#sketch"/></svg></button>
        <button class="tb" aria-label="平面"><svg><use href="#plane"/></svg></button>
        <button class="tb" aria-label="轴"><svg><use href="#axis"/></svg></button>
        <button class="tb" aria-label="曲线"><svg><use href="#curve"/></svg></button>
        <button class="tb more" aria-label="点"><svg><use href="#pts"/></svg></button>
        <button class="tb" aria-label="坐标系"><svg><use href="#csys"/></svg></button>
        <button class="tb" aria-label="分析"><svg><use href="#ruler"/></svg></button>
        <button class="tb" aria-label="参照"><svg><use href="#chain"/></svg></button>
        <i class="hgrip"></i>
        <button class="tb" aria-label="注释"><svg><use href="#note"/></svg></button>
        <button class="tb" aria-label="驱动"><svg><use href="#wheel"/></svg></button>
        <button class="tb" aria-label="传播"><svg><use href="#notes2"/></svg></button>
        <i class="hgrip"></i>
        <button class="tb" aria-label="孔"><svg><use href="#hole"/></svg></button>
        <button class="tb" aria-label="壳"><svg><use href="#shell"/></svg></button>
        <button class="tb more dim" aria-label="筋"><svg><use href="#rib"/></svg></button>
        <button class="tb" aria-label="拔模"><svg><use href="#draft"/></svg></button>
        <button class="tb" aria-label="倒圆角"><svg><use href="#round"/></svg></button>
        <button class="tb" aria-label="倒角"><svg><use href="#chamf"/></svg></button>
      </div>
      <div class="col">
        <button class="tb" aria-label="拉伸"><svg><use href="#extr"/></svg></button>
        <button class="tb" aria-label="旋转"><svg><use href="#revo"/></svg></button>
        <button class="tb" aria-label="扫描"><svg><use href="#blend"/></svg></button>
        <button class="tb" aria-label="边界混合"><svg><use href="#bound"/></svg></button>
        <button class="tb" aria-label="造型"><svg><use href="#sty"/></svg></button>
        <i class="hgrip"></i>
        <button class="tb" aria-label="镜像"><svg><use href="#mirr"/></svg></button>
        <button class="tb" aria-label="合并"><svg><use href="#merge"/></svg></button>
        <button class="tb" aria-label="修剪"><svg><use href="#trim"/></svg></button>
        <button class="tb" aria-label="阵列"><svg><use href="#patt"/></svg></button>
      </div>
    </div>
  </aside>
</main>

<div class="brand">
  <svg viewBox="0 0 58 58" fill="none"><path d="M3 8C12-1 34 8 41 28c2 5 1 8 0 10" stroke="#3f6dae" stroke-width="4"/><path d="M3 8c-4 8 5 22 17 28 4 2 8 1 10-1" stroke="#7496c6" stroke-width="3"/><path d="M42 20c14 0 17 12 8 24-6 8-12 11-19 9" stroke="#c5406c" stroke-width="4"/><path d="M31 53c-5-3-4-9 0-14" stroke="#8c7eb4" stroke-width="3"/><path d="M29 34c-8-3-18 0-19 6 0 5 6 8 13 5" stroke="#8aa6d4" stroke-width="3"/></svg>
  <div><strong>野火论坛</strong><span>www.proewildfire.cn</span></div>
</div>
</body>
</html>
```
FILE: styles.css
```
* { box-sizing: border-box; }
body {
  margin: 0; height: 100vh; display: flex; flex-direction: column; overflow: hidden; position: relative;
  border-top: 2px solid #7b8cd6; border-right: 2px solid #7b92d2;
  background: #dbe9f2; color: #222c35;
  font: 12px/16px "Noto Sans CJK SC", "Liberation Sans", sans-serif;
}
button { font: inherit; color: inherit; border: 0; background: none; padding: 0; margin: 0; }
h2, ul { margin: 0; padding: 0; list-style: none; }
.defs { position: absolute; }
.en { font-family: "DejaVu Sans Mono", "Liberation Mono", monospace; font-size: 10px; line-height: 10px; white-space: pre; }

.menubar { display: flex; gap: 14px; padding: 6px 5px 3px; height: 25px; background: linear-gradient(#f4f9fb, #e6f0f6); border-bottom: 1px solid #b8cad8; }
.menubar a { color: inherit; text-decoration: none; white-space: nowrap; }
.toolbars { display: flex; gap: 7px; padding: 2px 2px 3px 2px; border-top: 1px solid #f8fcfe; border-bottom: 1px solid #b3c5d3; }
.row { display: flex; height: 28px; align-items: center; }
.grip {
  width: 7px; height: 28px; margin: 0 3px 0 4px; flex: none;
  background: repeating-linear-gradient(90deg, transparent 0 1px, #dbe9f2 1px 2px), repeating-linear-gradient(#7892b0 0 1px, #dbe9f2 1px 2px);
}
.grip.tall { width: 3px; height: 56px; margin: 0; }
.tb { width: 28px; height: 26px; flex: none; display: flex; align-items: center; justify-content: center; position: relative; }
.tb svg { width: 20px; height: 20px; overflow: visible; }
.tb.flip svg { scale: -1 1; }
.tb.on { width: 26px; margin: 0 1px; border: 1px solid #7d97aa; border-radius: 3px; background: linear-gradient(#dcecf6, #b4d6e8); }
.dd { width: 13px; height: 26px; flex: none; display: flex; align-items: center; justify-content: center; }
.dd::after { content: ""; border: 3px solid transparent; border-top: 4px solid #1f282f; border-bottom: 0; }
.dd.off::after { border-top-color: #a2b0bb; }
.split { display: flex; width: 39px; margin: 0 1px; height: 26px; border: 1px solid #adbcc7; border-radius: 3px; }
.lasso { width: 26px; border-right: 1px solid #adbcc7; }
.lasso svg { width: 24px; height: 20px; display: block; }
.split .dd { width: 11px; height: 24px; }

.messages { display: flex; justify-content: space-between; align-items: flex-end; border-top: 1px solid #f8fcfe; border-bottom: 2px solid #f2f8fb; height: 82px; }
.log { align-self: flex-start; padding-top: 1px; font-size: 11px; }
.log li { display: flex; height: 16px; align-items: center; gap: 2px; }
.log svg { width: 12px; height: 12px; }
.bullet { width: 5px; height: 5px; margin: 0 3px 0 4px; border-radius: 50%; background: #1010c0; }
.status { display: flex; align-items: center; gap: 100px; padding: 0 3px 1px 0; }
.therm { display: flex; justify-content: center; width: 31px; height: 26px; padding-top: 4px; border: solid #b9cad6; border-width: 0 1px; }
.therm svg { width: 12px; height: 20px; }
.filter {
  appearance: none; width: 178px; height: 20px; border: 1px solid #7793a8; border-radius: 3px;
  background: linear-gradient(#1f282f, #1f282f) right 7px top 9px / 1px 1px no-repeat, linear-gradient(#1f282f, #1f282f) right 6px top 8px / 3px 1px no-repeat, linear-gradient(#1f282f, #1f282f) right 5px top 7px / 5px 1px no-repeat, #fff;
}

.work { flex: 1; min-height: 0; display: flex; }
.side { width: 240px; flex: none; display: grid; grid-template-columns: 1fr 9px; grid-template-rows: 28px 1fr; background: linear-gradient(90deg, #cfe0eb, #d6e7f1); }
.tabs { grid-column: 1 / 3; display: flex; align-items: flex-end; padding-left: 5px; background: linear-gradient(#cbdde9, #d8e7f0); }
.tab { width: 46px; height: 25px; margin-right: -4px; padding: 1px 0 0 11px; clip-path: polygon(0 0, 70% 0, 80% 12%, 100% 100%, 0 100%); background: linear-gradient(#a9c3d9, #bcd2e2); border-radius: 4px 0 0 0; text-align: left; }
.tab.active { background: linear-gradient(#f5fafc, #fff); }
.tab svg { width: 20px; height: 20px; }
.panel { display: flex; flex-direction: column; padding: 0 8px 5px 5px; border: 1px solid #9fb6c6; border-width: 1px 1px 0 0; border-radius: 0 5px 0 0; background: linear-gradient(90deg, #fff, #cfe0eb) top / 100% 31px no-repeat; }
.panelhead { display: flex; align-items: center; height: 31px; padding-left: 18px; position: relative; }
.panelhead h2 { font-size: 13px; line-height: 16px; flex: 1; padding-bottom: 2px; }
.panelhead .tools { width: 62px; height: 14px; align-self: flex-end; margin-bottom: 6px; }
.panelhead .dd { margin-right: -7px; }
.panelhead .dd::after { border-width: 5px 4px 0; }
.tip { position: absolute; left: 123px; top: -3px; width: 82px; height: 21px; line-height: 18px; text-align: center; border: 1px solid #60747f; border-radius: 4px; background: #fbfdfe; color: #405872; white-space: nowrap; }
.tree { flex: 1; min-height: 0; border: 1px solid #7893a5; border-radius: 4px; background: #fff; }
.root { display: flex; align-items: center; gap: 7px; height: 20px; padding-left: 3px; }
.root svg { width: 16px; height: 16px; }
.tree ul { margin-left: 12px; background: repeating-linear-gradient(#a0a8ae 0 1px, #fff 1px 2px) left top / 1px 350px no-repeat; }
.tree li { display: flex; align-items: center; height: 20px; line-height: 20px; padding-left: 10px; white-space: pre; background: repeating-linear-gradient(90deg, #a0a8ae 0 1px, transparent 1px 2px) left 10px / 11px 1px no-repeat; }
.tree li svg { width: 17px; height: 17px; margin-right: 7px; }
.sq { width: 4px; height: 5px; margin: 0 2px 4px 0; background: #2b333a; }
.star { width: 9px; color: #c8b400; background: #fdf69c; }
.sash { display: flex; flex-direction: column; gap: 8px; padding-top: 158px; }
.sash button { height: 94px; display: grid; place-items: center; border: 1px solid #b4c8d6; border-right: 0; border-radius: 4px 0 0 4px; }
.sash .dark { height: 92px; border: 1px solid #7590a3; border-right: 0; background: #c6d8e4; }
.sash button::after { content: ""; width: 3px; height: 3px; border-radius: 50%; background: #5c7284; }

.view { flex: 1; min-width: 0; position: relative; overflow: hidden; background: linear-gradient(#c6daea, #5a79a8); }
.scene { position: absolute; inset: 0; width: 100%; height: 100%; }
.mode { position: absolute; left: 6px; top: 501px; font-size: 6px; font-weight: bold; line-height: 8px; color: #f2edc8; }

.menuman { position: absolute; left: 85px; top: 134px; width: 274px; padding: 0 4px 4px; border: 1px solid #0a2fb0; border-radius: 7px 7px 0 0; background: #0d46d8; }
.menuman h2 { margin: 0 -4px; padding: 4px 7px 0; height: 28px; font-size: 14px; line-height: 20px; color: #fff; border-radius: 6px 6px 0 0; background: linear-gradient(#4b9cff 0, #0a55e0 15%, #0552e4 60%, #0848cc); }
.chain { display: flex; align-items: center; height: 17px; padding-left: 1px; gap: 4px; background: #303b45; color: #fff; }
.chain i { border: 6px solid transparent; border-top: 6px solid #fff; border-bottom: 0; }
.focus { height: 16px; line-height: 14px; border: 1px dotted #c8d0d6; white-space: nowrap; }
.list { background: #fff; padding: 1px 2px 3px; border-top: 1px solid #c8d0d6; border-radius: 0 0 3px 3px; }
.list button { display: block; width: 100%; height: 23px; line-height: 20px; padding-left: 23px; text-align: left; white-space: nowrap; }
.list .sel { background: #303b45; color: #fff; }
.list .strong { font-weight: bold; }
.list hr { height: 1px; margin: 0 0 1px; border: 0; background: linear-gradient(90deg, #fff, #b4bdc4 10% 90%, #fff); }

.dialog { position: absolute; left: 472px; top: 179px; width: 221px; padding: 0 3px 3px; border: 1px solid #5a68c8; border-radius: 6px 6px 0 0; background: #6c80d8; }
.title { display: flex; align-items: center; gap: 4px; height: 28px; margin: 0 -3px; padding: 2px 5px 0; border-radius: 5px 5px 0 0; background: linear-gradient(#a4b8f4 0, #7a92e2 20%, #7c94e2 70%, #7086dc); }
.title h2 { flex: 1; font-size: 14px; line-height: 18px; padding-bottom: 2px; color: #dce6fc; white-space: nowrap; }
.title > svg { width: 16px; height: 16px; }
.close { width: 20px; height: 20px; display: grid; place-items: center; border: 1px solid #e8dcec; border-radius: 3px; background: #bb5f7c; }
.close svg { width: 12px; height: 12px; }
.inner { background: #dae8f1; padding: 7px 3px 1px 6px; }
.box { height: 94px; margin-right: 5px; border: 1px solid #7d9aae; border-radius: 4px; background: #fff; overflow: hidden; }
table { width: 100%; border-collapse: collapse; table-layout: fixed; }
.c1 { width: 17px; } .c2 { width: 104px; } .c3 { width: 46px; }
th { height: 20px; padding: 0 0 0 7px; text-align: left; font-size: 13px; line-height: 19px; background: linear-gradient(#fff 40%, #dbe6ed); border: 1px solid #c6d3db; border-width: 0 1px 1px 0; }
td { height: 14px; padding: 0; line-height: 14px; white-space: nowrap; }
.mark svg { display: block; width: 6px; height: 10px; margin-left: 5px; }
.btns { display: grid; grid-template-columns: repeat(3, 38px); justify-content: space-between; gap: 2px 0; padding-top: 9px; }
.btns button { height: 20px; line-height: 17px; border: 1px solid #7b9bb2; border-radius: 3px; background: linear-gradient(#fff, #e4eef4); white-space: nowrap; color: #0d161e; }
.btns .hot { border: 2px solid #5f92b4; background: #a4d2f2; line-height: 15px; }
.btns .def { border: 2px solid #8db6d0; line-height: 15px; }
.btns button:disabled { border-color: #b8c6d0; background: #dee9f0; color: #a2b0ba; }

.right { width: 68px; flex: none; overflow: hidden; padding-top: 4px; display: flex; flex-direction: column; }
.hgrip { display: block; flex: none; height: 5px; margin: 5px 0 4px; background: repeating-linear-gradient(90deg, transparent 0 1px, #dbe9f2 1px 2px), repeating-linear-gradient(#7892b0 0 1px, #dbe9f2 1px 2px); }
.right > .hgrip { margin: 0 0 5px; }
.cols { display: flex; }
.col { display: flex; flex-direction: column; width: 40px; }
.col + .col { width: 28px; }
.col .tb { height: 28px; }
.more::after { content: ""; position: absolute; left: 32px; top: 11px; border: 3px solid transparent; border-left: 4px solid #2c3840; border-right: 0; }
.more.dim::after { border-left-color: #a4b0b9; }

.brand { position: absolute; right: 3px; bottom: 5px; width: 206px; height: 62px; padding: 0 2px; display: flex; align-items: center; background: rgba(255, 255, 255, .38); }
.brand svg { width: 58px; height: 58px; flex: none; opacity: .85; }
.brand div { display: flex; flex-direction: column; align-items: center; flex: 1; }
.brand strong { font-size: 28px; line-height: 41px; color: #48a88c; white-space: nowrap; }
.brand span { font: 15px/20px "Noto Sans", sans-serif; color: #8fa9c4; white-space: nowrap; }
```
